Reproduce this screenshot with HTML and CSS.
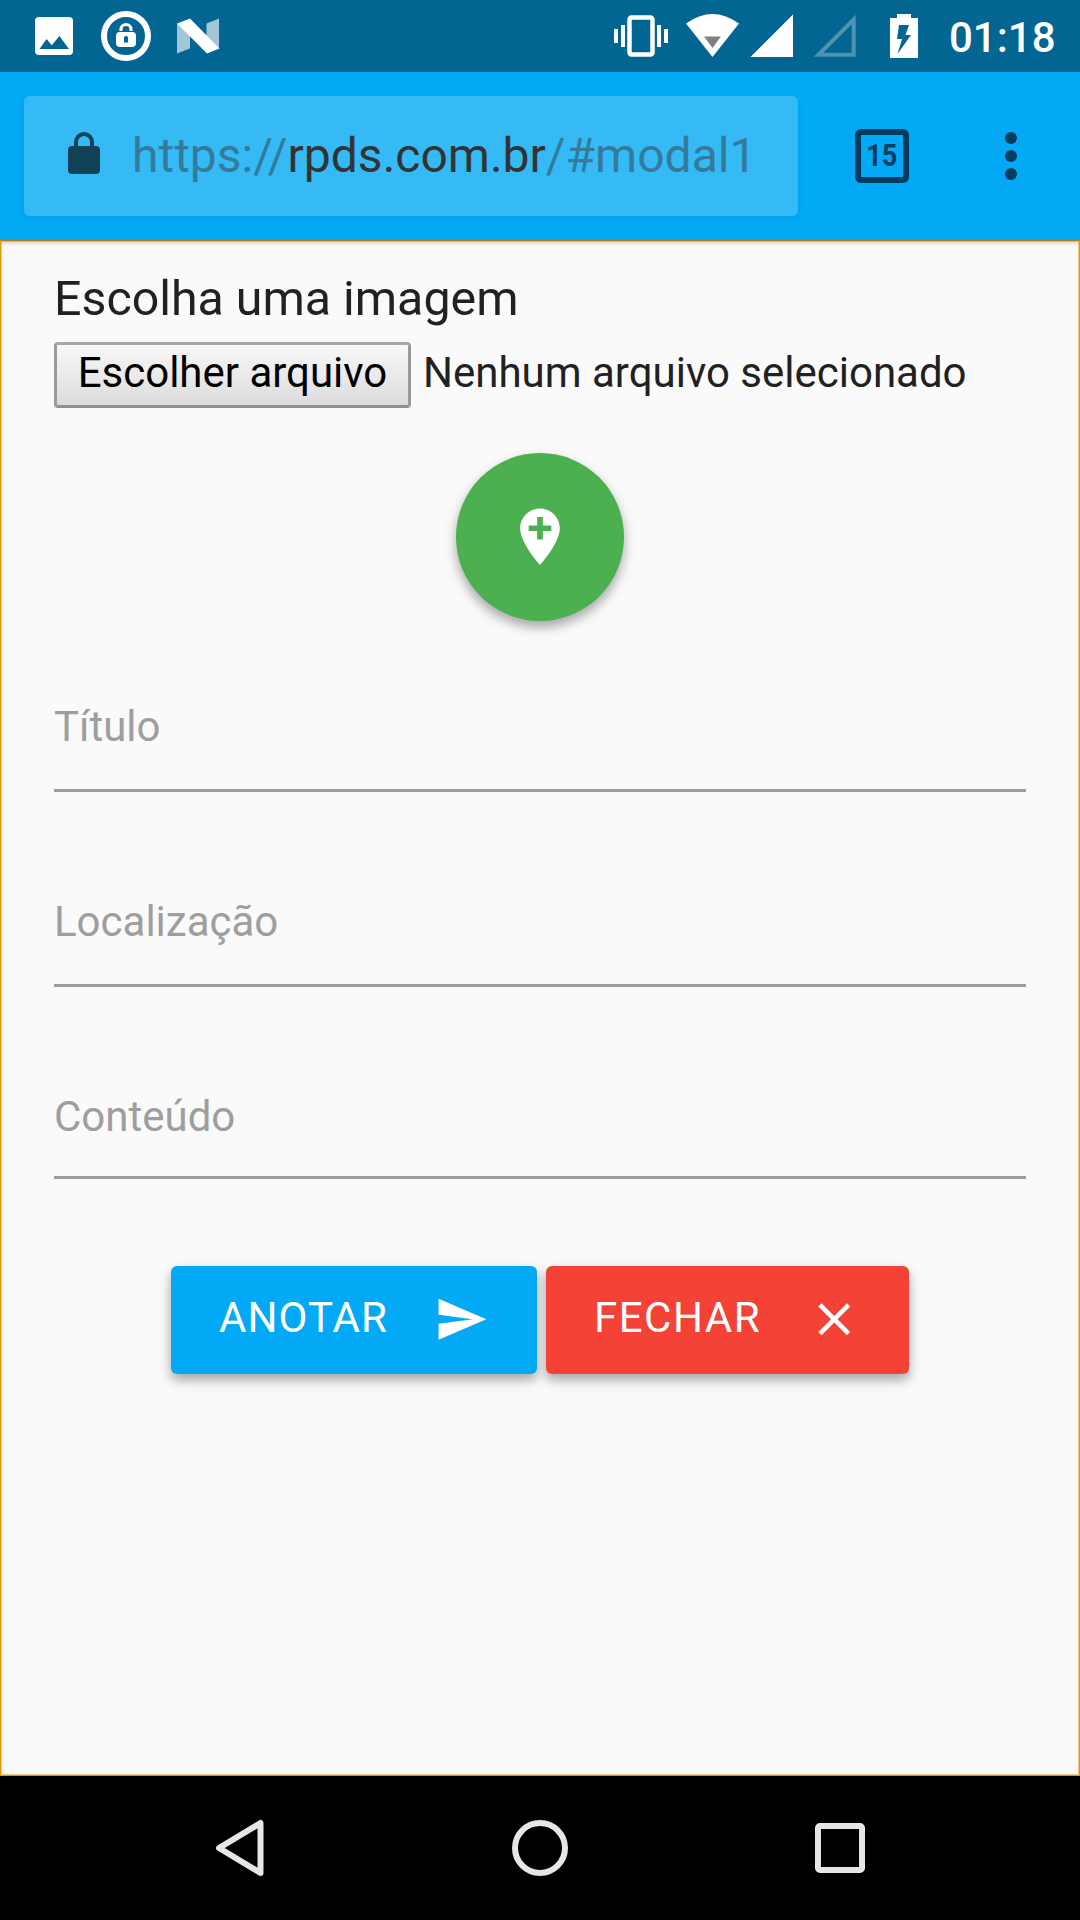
FILE: index.html
```html
<!DOCTYPE html>
<html lang="pt-BR">
<head>
<meta charset="utf-8">
<title>RPDS</title>
<link rel="stylesheet" href="styles.css">
</head>
<body>
<div class="phone">
  <header class="status">
    <svg class="status-icons" width="240" height="72" viewBox="0 0 240 72">
      <path fill="#fff" fill-rule="evenodd" d="M39 17h30a4 4 0 0 1 4 4v30a4 4 0 0 1-4 4H39a4 4 0 0 1-4-4V21a4 4 0 0 1 4-4zM39.500 49H69l-9.600-13-7.600 9.300-5.300-6.300z"/>
      <circle cx="126" cy="36" r="22" fill="none" stroke="#fff" stroke-width="6"/>
      <path d="M121 31v-2a5 4.500 0 0 1 10 0v2" fill="none" stroke="#fff" stroke-width="3.200"/>
      <path fill="#fff" fill-rule="evenodd" d="M119.500 32h13q3.500 0 3.500 4v7q0 4-4 4h-12q-4 0-4-4v-7q0-4 3.500-4zM124 37v5.500h4V37q-2-2-4 0z"/>
      <path fill="#a2c6d7" d="M177 23.500L190 34v14.500l-13 5zM206.500 23.500L219 18.500v30L206.500 36z"/>
      <path fill="#fff" d="M177 23.500l13-5 29.500 30-12.500 5z"/>
    </svg>
    <svg class="status-icons" width="320" height="72" viewBox="610 0 320 72">
      <rect x="629.500" y="17.500" width="23" height="37" rx="2" fill="none" stroke="#fff" stroke-width="4.500"/>
      <path fill="#fff" d="M614 29h4v14h-4zM621 25h4v22h-4zM657 25h4v22h-4zM664 29h4v14h-4z"/>
      <path fill="#fff" d="M686 23.500q26.500-19 53 0L712.500 57z"/>
      <path fill="#808080" d="M704 36.500h17L712.500 48z"/>
      <path fill="#fff" d="M793 14.500V57h-42.500z"/>
      <path fill="none" stroke="#4c94b3" stroke-width="4" d="M853.700 19.500V54.800h-35.200z"/>
      <path fill="#fff" fill-rule="evenodd" d="M897 14h14v4h7v40h-28V18h7zM899 25l-2 14h5l-4.500 15L911 35h-5.500l3.500-10z"/>
    </svg>
    <span class="clock">01:18</span>
  </header>

  <div class="toolbar">
    <div class="omnibox">
      <svg class="lock" width="32" height="42" viewBox="0 0 32 42">
        <rect y="14" width="32" height="28" rx="4" fill="#124257"/>
        <path d="M8 15v-5a8 8 0 0 1 16 0v5" fill="none" stroke="#124257" stroke-width="4"/>
      </svg>
      <span class="url">https://<b>rpds.com.br</b>/#modal1</span>
    </div>
    <div class="tabs"><span>15</span></div>
    <div class="menu"><i></i><i></i><i></i></div>
  </div>

  <main class="page">
    <h1>Escolha uma imagem</h1>
    <div class="file">
      <button class="choose" type="button"><span>Escolher arquivo</span></button>
      <span class="filename">Nenhum arquivo selecionado</span>
    </div>
    <button class="fab" type="button" aria-label="Adicionar local">
      <svg width="68" height="68" viewBox="0 0.1 24 24"><path fill="#fff" d="M12 2C8.140 2 5 5.140 5 9c0 5.250 7 13 7 13s7-7.750 7-13c0-3.860-3.140-7-7-7zm4 8h-3v3h-2v-3H8V8h3V5h2v3h3v2z"/></svg>
    </button>
    <div class="field"><label>Título</label></div>
    <div class="field"><label>Localização</label></div>
    <div class="field field-area"><label>Conteúdo</label></div>
    <div class="actions">
      <button class="btn btn-send" type="button"><span>ANOTAR</span>
        <svg width="54.6" height="54.6" viewBox="0 0 24 24"><path fill="#fff" d="M2.010 21L23 12 2.010 3 2 10l15 2-15 2z"/></svg>
      </button>
      <button class="btn btn-close" type="button"><span>FECHAR</span>
        <svg width="54.6" height="54.6" viewBox="0 0 24 24"><path fill="#fff" d="M19 6.410L17.590 5 12 10.590 6.410 5 5 6.410 10.590 12 5 17.590 6.410 19 12 13.410 17.590 19 19 17.590 13.410 12z"/></svg>
      </button>
    </div>
  </main>

  <nav class="navbar">
    <svg width="60" height="60" viewBox="0 0 60 60"><path d="M50.500 5v50L9 30z" fill="none" stroke="#e6e6e6" stroke-width="6" stroke-linejoin="round"/></svg>
    <svg width="60" height="60" viewBox="0 0 60 60"><circle cx="30" cy="30" r="25" fill="none" stroke="#e6e6e6" stroke-width="6"/></svg>
    <svg width="60" height="60" viewBox="0 0 60 60"><rect x="8" y="8" width="44" height="44" rx="2" fill="none" stroke="#e6e6e6" stroke-width="6"/></svg>
  </nav>
</div>
</body>
</html>
```
FILE: styles.css
```css
* { box-sizing: border-box; }
body { margin: 0; font-family: Roboto, "Liberation Sans", sans-serif; color: #212121; }
button { font: inherit; border: 0; margin: 0; padding: 0; }
svg { display: block; flex: none; }

.phone { width: 1080px; height: 1920px; display: flex; flex-direction: column; overflow: hidden; }

.status { height: 72px; flex: none; display: flex; background: #026592; }
.status .status-icons + .status-icons { margin-left: 370px; }
.clock { margin-left: 19px; font-size: 42px; font-weight: 500; line-height: 75px; color: #fff; white-space: nowrap; }

.toolbar { height: 168px; flex: none; display: flex; align-items: center; padding-left: 24px; background: #03a9f4; }
.omnibox { width: 774px; height: 120px; display: flex; align-items: center; padding-left: 44px; border-radius: 6px; background: #35baf6; box-shadow: 0 2px 6px rgba(0, 60, 120, .08); }
.lock { margin-top: -6px; }
.url { margin-left: 32px; font-size: 48px; line-height: 60px; color: #347b9b; white-space: nowrap; }
.url b { font-weight: 400; color: #333; }
.tabs { width: 54px; height: 54px; margin-left: 57px; border: 6px solid #023f5c; border-radius: 6px; display: flex; align-items: center; justify-content: center; color: #023f5c; font-size: 31px; font-weight: 700; }
.tabs span { transform: translateY(-1px) scaleX(.87); }
.menu { margin-left: 96px; display: flex; flex-direction: column; gap: 6px; }
.menu i { width: 12px; height: 12px; border-radius: 50%; background: #023f5c; }

.page { height: 1536px; flex: none; padding: 26px 53px 0; display: flex; flex-direction: column; background: #fafafa; border: 1px solid #e89600; border-top-color: #b8770c; box-shadow: inset 0 0 0 1px rgba(232, 150, 0, .45), inset 0 4px 3px -1px rgba(0, 0, 0, .12); }
h1 { margin: 0; font-size: 48.3px; font-weight: 400; line-height: 64px; height: 75px; white-space: nowrap; }
.file { display: flex; height: 66px; align-items: flex-start; white-space: nowrap; font-size: 42px; line-height: 62px; }
.choose { width: 357px; height: 66px; border: 3px solid #9a9a9a; border-color: #a5a5a5 #9a9a9a #909090; border-radius: 4px; background: linear-gradient(#f8f8f8, #dcdcdc); color: #000; line-height: 56px; display: flex; justify-content: center; }
.filename { margin-left: 12px; }
.fab { width: 168px; height: 168px; margin: 45px auto 0; border-radius: 50%; background: #4caf50; display: flex; align-items: center; justify-content: center; box-shadow: 0 6px 15px rgba(0, 0, 0, .16), 0 6px 10px rgba(0, 0, 0, .2); flex: none; }
.field { height: 132px; flex: none; margin-top: 63px; border-bottom: 3px solid #9e9e9e; padding-top: 39px; font-size: 42px; line-height: 56px; color: #9e9e9e; }
.fab + .field { margin-top: 39px; }
.field-area { height: 129px; }
.actions { margin-top: 87px; display: flex; justify-content: center; gap: 9px; }
.btn { height: 108px; padding: 0 48px; display: flex; align-items: center; justify-content: space-between; border-radius: 6px; color: #fff; font-size: 42px; letter-spacing: 1.5px; box-shadow: 0 6px 15px rgba(0, 0, 0, .16), 0 6px 10px rgba(0, 0, 0, .2); }
.btn span { padding-bottom: 5px; }
.btn svg { margin-bottom: 1px; }
.btn-send { width: 366px; letter-spacing: 1.1px; background: #03a9f4; }
.btn-close { width: 363px; padding-right: 47px; background: #f44336; }

.navbar { flex: 1; display: flex; align-items: center; justify-content: center; gap: 240px; background: #000; }
```
